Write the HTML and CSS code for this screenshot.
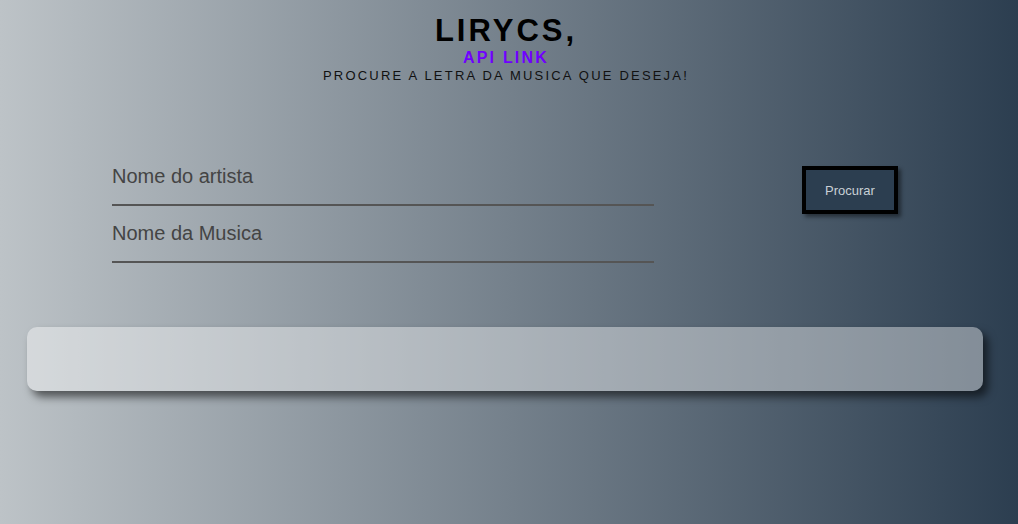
FILE: index.html
```html
<!DOCTYPE html>
<html lang="pt">
<head>
<meta charset="utf-8">
<title>Lirycs</title>
<link rel="stylesheet" href="styles.css">
</head>
<body>
<header class="header">
  <h1 class="title">LIRYCS,</h1>
  <h2 class="subtitle">API LINK</h2>
  <p class="tagline">PROCURE A LETRA DA MUSICA QUE DESEJA!</p>
</header>
<form class="search">
  <div class="fields">
    <input class="field" type="text" placeholder="Nome do artista">
    <input class="field" type="text" placeholder="Nome da Musica">
  </div>
  <button class="btn" type="button">Procurar</button>
</form>
<section class="result"></section>
</body>
</html>
```
FILE: styles.css
```css
html {
  height: 100%;
}
body {
  margin: 0;
  min-height: 100%;
  background: linear-gradient(to right, #bdc3c7, #2c3e50);
  font-family: "Liberation Sans", Arial, sans-serif;
  color: #000;
}
.header {
  text-align: center;
  padding-top: 14px;
  padding-right: 6px;
}
.title {
  margin: 0 0 2px;
  font-size: 31px;
  line-height: 34px;
  font-weight: bold;
  letter-spacing: 3px;
}
.subtitle {
  margin: 0;
  font-size: 16px;
  line-height: 16px;
  font-weight: bold;
  letter-spacing: 2.2px;
  color: #7000ff;
}
.tagline {
  margin: 1px 0 0;
  font-size: 13px;
  line-height: 18px;
  letter-spacing: 2.2px;
  color: #111;
}
.search {
  display: flex;
  align-items: flex-start;
  padding-left: 112px;
  margin-top: 64px;
}
.fields {
  display: flex;
  flex-direction: column;
  width: 542px;
}
.field {
  background: transparent;
  border: none;
  border-bottom: 2px solid #555;
  outline: none;
  font-family: "Liberation Sans", Arial, sans-serif;
  font-size: 20px;
  height: 57px;
  padding: 0;
  box-sizing: border-box;
  color: #444;
}
.field::placeholder {
  color: #444;
  opacity: 1;
}
.btn {
  margin-left: 148px;
  margin-top: 17px;
  width: 96px;
  height: 48px;
  border: 4px solid #000;
  background: #2c3e50;
  color: #c9d0d6;
  font-family: "Liberation Sans", Arial, sans-serif;
  font-size: 13px;
  box-shadow: 3px 3px 4px rgba(0, 0, 0, 0.45);
  cursor: pointer;
}
.result {
  margin: 64px 0 0 27px;
  width: 956px;
  height: 64px;
  border-radius: 10px;
  background: rgba(255, 255, 255, 0.4);
  box-shadow: 5px 6px 8px rgba(0, 0, 0, 0.55);
}
```
